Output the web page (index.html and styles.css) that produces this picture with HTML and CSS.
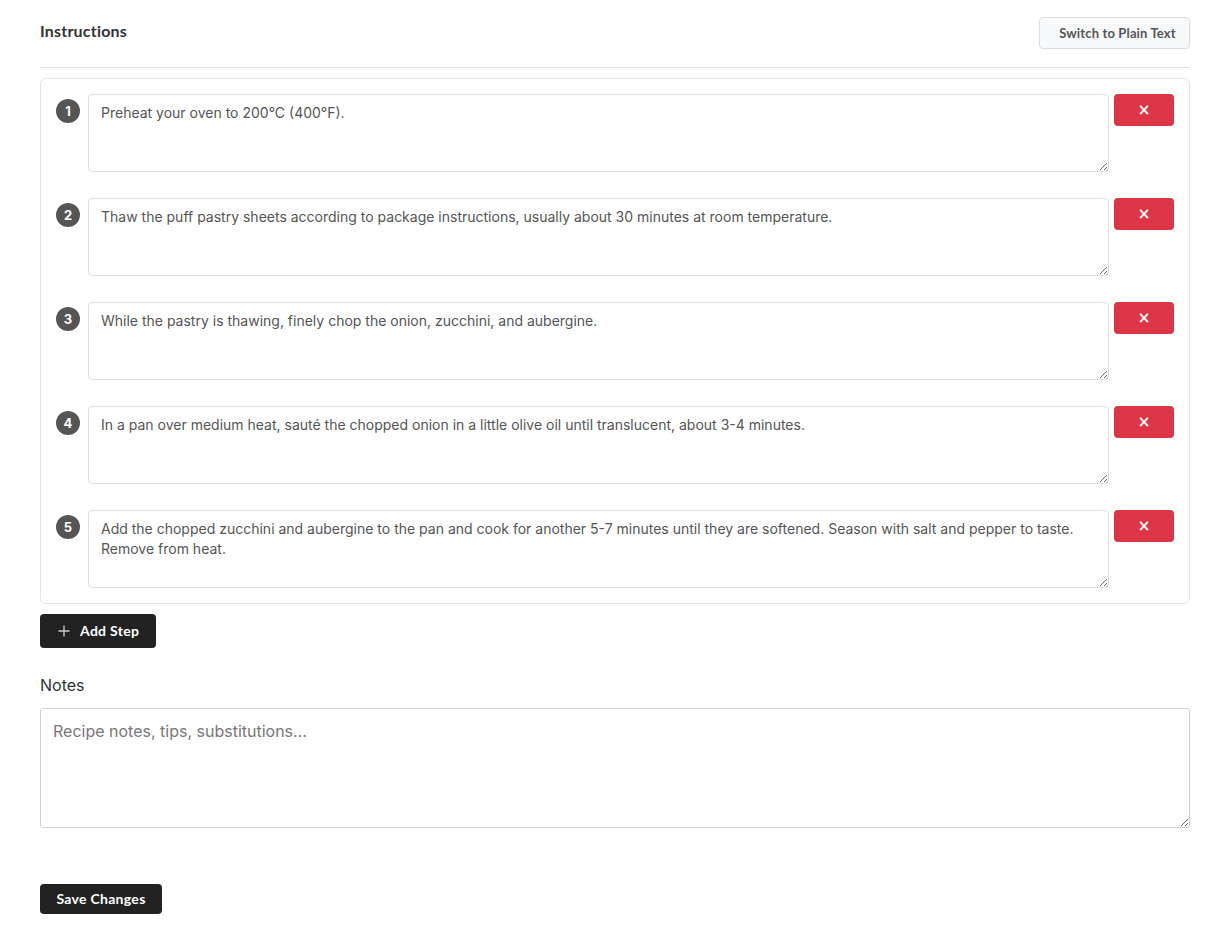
FILE: index.html
```html
<!DOCTYPE html>
<html>
<head>
<meta charset="utf-8">
<link rel="stylesheet" href="styles.css">
</head>
<body>
<div class="page">
  <div class="section-head">
    <h3 class="section-title">Instructions</h3>
    <button class="btn-light">Switch to Plain Text</button>
  </div>
  <div class="steps">
    <div class="step">
      <span class="num">1</span>
      <textarea class="step-text">Preheat your oven to 200°C (400°F).</textarea>
      <button class="btn-del">×</button>
    </div>
    <div class="step">
      <span class="num">2</span>
      <textarea class="step-text">Thaw the puff pastry sheets according to package instructions, usually about 30 minutes at room temperature.</textarea>
      <button class="btn-del">×</button>
    </div>
    <div class="step">
      <span class="num">3</span>
      <textarea class="step-text">While the pastry is thawing, finely chop the onion, zucchini, and aubergine.</textarea>
      <button class="btn-del">×</button>
    </div>
    <div class="step">
      <span class="num">4</span>
      <textarea class="step-text">In a pan over medium heat, sauté the chopped onion in a little olive oil until translucent, about 3-4 minutes.</textarea>
      <button class="btn-del">×</button>
    </div>
    <div class="step">
      <span class="num">5</span>
      <textarea class="step-text">Add the chopped zucchini and aubergine to the pan and cook for another 5-7 minutes until they are softened. Season with salt and pepper to taste. Remove from heat.</textarea>
      <button class="btn-del">×</button>
    </div>
  </div>
  <button class="btn-dark btn-add">
    <svg width="12" height="12" viewBox="0 0 12 12"><path d="M6 0.5V11.5M0.5 6H11.5" stroke="#cfcfcf" stroke-width="1.3" fill="none"/></svg>
    <span>Add Step</span>
  </button>
  <label class="notes-label">Notes</label>
  <textarea class="notes" placeholder="Recipe notes, tips, substitutions..."></textarea>
  <button class="btn-dark btn-save">Save Changes</button>
</div>
</body>
</html>
```
FILE: styles.css
```css
html, body {
  margin: 0;
  padding: 0;
  background: #fff;
}
body {
  font-family: Inter, "Liberation Sans", sans-serif;
  color: #333;
}
.page {
  width: 1150px;
  padding: 17px 0 0 40px;
}
.section-head {
  display: flex;
  justify-content: space-between;
  align-items: flex-start;
  padding-bottom: 17px;
  border-bottom: 1px solid #e3e3e3;
}
.section-title {
  margin: 4px 0 0 0;
  font-family: Lato, "Open Sans", sans-serif;
  font-size: 16px;
  font-weight: 700;
  color: #333;
  letter-spacing: 0.2px;
}
.btn-light {
  height: 32px;
  width: 151px;
  margin-bottom: 1px;
  padding: 0 0 1px 6px;
  background: #f8f9fa;
  border: 1px solid #dcdcdc;
  border-radius: 4px;
  font-family: Lato, "Open Sans", sans-serif;
  font-size: 13px;
  font-weight: 700;
  letter-spacing: 0.15px;
  color: #555;
}
.steps {
  margin-top: 10px;
  border: 1px solid #e3e3e3;
  border-radius: 6px;
  padding: 15px;
  display: flex;
  flex-direction: column;
  gap: 26px;
}
.step {
  display: flex;
  align-items: flex-start;
}
.num {
  flex: none;
  width: 24px;
  height: 24px;
  margin-top: 5px;
  border-radius: 50%;
  background: #555;
  color: #fff;
  font-size: 13px;
  font-weight: 700;
  display: flex;
  align-items: center;
  justify-content: center;
}
.step-text {
  flex: none;
  box-sizing: border-box;
  width: 1021px;
  height: 78px;
  margin-left: 8px;
  padding: 8px 12px;
  border: 1px solid #dedede;
  border-radius: 4px;
  font-family: Inter, "Liberation Sans", sans-serif;
  font-size: 14px;
  line-height: 20px;
  color: #555;
  resize: vertical;
}
.btn-del {
  flex: none;
  width: 60px;
  height: 32px;
  margin-left: 5px;
  background: #dc3545;
  border: none;
  border-radius: 4px;
  color: #fff;
  font-size: 15px;
  font-weight: 700;
  padding: 0;
  font-family: "DejaVu Sans", sans-serif;
}
.btn-dark {
  display: flex;
  align-items: center;
  background: #222;
  border: none;
  border-radius: 4px;
  color: #fff;
  font-family: Lato, "Open Sans", sans-serif;
  font-weight: 700;
  font-size: 14px;
  letter-spacing: 0.3px;
}
.btn-add {
  margin-top: 10px;
  height: 34px;
  width: 116px;
  padding: 0 0 1px 18px;
  gap: 10px;
}
.notes-label {
  display: block;
  margin-top: 27px;
  font-size: 16px;
  color: #333;
}
.notes {
  display: block;
  box-sizing: border-box;
  margin-top: 13px;
  width: 1150px;
  height: 120px;
  padding: 11px 12px;
  border: 1px solid #cfcfcf;
  border-radius: 3px;
  font-family: Inter, "Liberation Sans", sans-serif;
  font-size: 16px;
  line-height: 22px;
  color: #555;
  resize: vertical;
}
.notes::placeholder {
  color: #777;
}
.btn-save {
  margin-top: 56px;
  height: 30px;
  width: 122px;
  padding: 0 0 1px 0;
  justify-content: center;
}
```
